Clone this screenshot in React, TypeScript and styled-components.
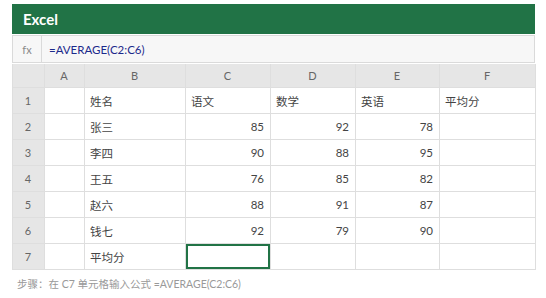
import React from 'react';
import styled, { createGlobalStyle } from 'styled-components';

const GlobalStyle = createGlobalStyle`
  html, body {
    margin: 0;
    padding: 0;
    background: #fff;
  }
  body {
    font-family: Lato, 'Noto Sans CJK SC', sans-serif;
  }
`;

const Page = styled.div`
  width: 546px;
  height: 298px;
  box-sizing: border-box;
  padding: 4px 11px 0 12px;
`;

const Sheet = styled.div`
  width: 523px;
  display: flex;
  flex-direction: column;
`;

const TitleBar = styled.div`
  height: 30px;
  background: #217346;
  color: #fff;
  font-weight: 700;
  font-size: 15px;
  display: flex;
  align-items: center;
  padding-left: 11px;
`;

const FormulaBar = styled.div`
  height: 26px;
  margin-top: 1px;
  border: 1px solid #dadada;
  background: #f7f7f7;
  display: flex;
  align-items: stretch;
`;

const FxLabel = styled.div`
  width: 28px;
  border-right: 1px solid #dadada;
  color: #8a8a8a;
  font-size: 11px;
  display: flex;
  align-items: center;
  justify-content: center;
`;

const Formula = styled.div`
  display: flex;
  align-items: center;
  padding-left: 7px;
  color: #1c2a8c;
  font-size: 11.5px;
`;

const Grid = styled.div`
  margin-top: 1px;
  display: grid;
  grid-template-columns: 32px 40px 101px 85px 85px 84px 96px;
  grid-template-rows: 24px repeat(7, 26px);
  border-left: 1px solid #dedede;
`;

const Cell = styled.div<{ $head?: boolean; $num?: boolean; $selected?: boolean }>`
  box-sizing: border-box;
  border-right: 1px solid #dedede;
  border-bottom: 1px solid #dedede;
  background: ${(p) => (p.$head ? '#e6e6e6' : '#fff')};
  color: ${(p) => (p.$head ? '#666' : '#444')};
  font-size: ${(p) => (p.$head ? '11px' : '11.5px')};
  display: flex;
  align-items: center;
  justify-content: ${(p) => (p.$head ? 'center' : p.$num ? 'flex-end' : 'flex-start')};
  padding: 0 6px 0 5px;
  box-shadow: ${(p) => (p.$selected ? 'inset 0 0 0 2px #217346' : 'none')};
`;

const Note = styled.div`
  margin-top: 6px;
  padding-left: 5px;
  font-size: 10.5px;
  color: #999;
`;

const cols = ['A', 'B', 'C', 'D', 'E', 'F'];

const rows: (string | number)[][] = [
  ['', '姓名', '语文', '数学', '英语', '平均分'],
  ['', '张三', 85, 92, 78, ''],
  ['', '李四', 90, 88, 95, ''],
  ['', '王五', 76, 85, 82, ''],
  ['', '赵六', 88, 91, 87, ''],
  ['', '钱七', 92, 79, 90, ''],
  ['', '平均分', '', '', '', ''],
];

export default function App() {
  return (
    <Page>
      <GlobalStyle />
      <Sheet>
        <TitleBar>Excel</TitleBar>
        <FormulaBar>
          <FxLabel>fx</FxLabel>
          <Formula>=AVERAGE(C2:C6)</Formula>
        </FormulaBar>
        <Grid>
          <Cell $head />
          {cols.map((c) => (
            <Cell $head key={c}>
              {c}
            </Cell>
          ))}
          {rows.map((row, r) => (
            <React.Fragment key={r}>
              <Cell $head>{r + 1}</Cell>
              {row.map((v, c) => (
                <Cell
                  key={c}
                  $num={typeof v === 'number'}
                  $selected={r === 6 && c === 2}
                >
                  {v}
                </Cell>
              ))}
            </React.Fragment>
          ))}
        </Grid>
        <Note>步骤：在 C7 单元格输入公式 =AVERAGE(C2:C6)</Note>
      </Sheet>
    </Page>
  );
}
